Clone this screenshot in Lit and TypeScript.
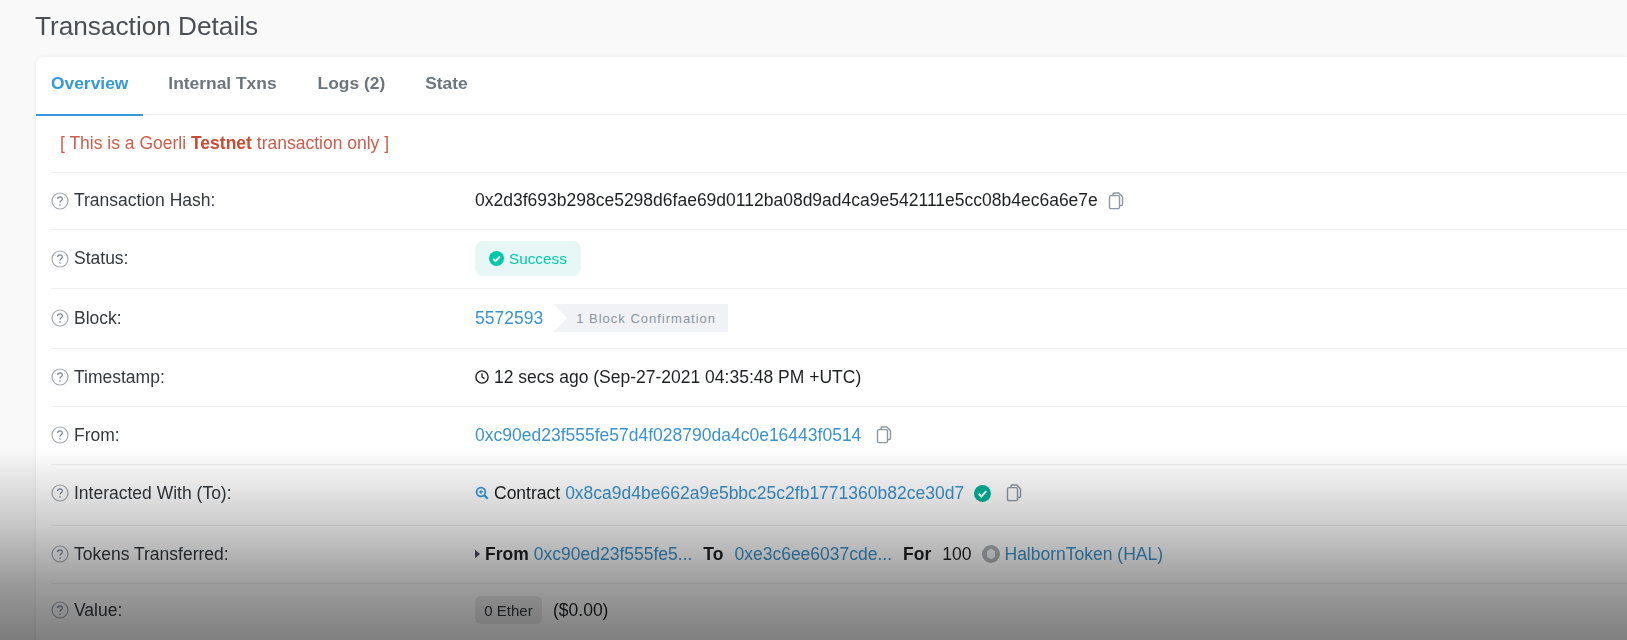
import { LitElement, html, css } from "lit";
import { customElement } from "lit/decorators.js";

const help = html`<svg class="help" viewBox="0 0 18 18" width="18" height="18"><circle cx="9" cy="9" r="8" fill="none" stroke="#a3a8ad" stroke-width="1.2"/><path d="M6.6 7.1c.1-1.4 1-2.2 2.4-2.2 1.4 0 2.3.8 2.3 2 0 1.8-2.3 1.8-2.3 3.6" fill="none" stroke="#77838f" stroke-width="1.2"/><circle cx="9" cy="13" r=".8" fill="#77838f"/></svg>`;
const copy = html`<svg class="copy" viewBox="0 0 16 18" width="16" height="18"><path d="M5 3.5V2.2C5 1.5 5.5 1 6.2 1h4.6L14.5 4.7v7.6c0 .7-.5 1.2-1.2 1.2H12" fill="none" stroke="#8c98a4" stroke-width="1.4"/><rect x="1.5" y="3.6" width="10" height="13" rx="1.4" fill="#fff" fill-opacity=".3" stroke="#8c98a4" stroke-width="1.4"/></svg>`;
const check = (c: string, s: number) => html`<svg viewBox="0 0 16 16" width=${s} height=${s}><circle cx="8" cy="8" r="8" fill=${c}/><path d="M4.4 8.3l2.5 2.5 4.7-5" fill="none" stroke="#fff" stroke-width="1.9"/></svg>`;

@customElement("app-root")
export class AppRoot extends LitElement {
  static styles = css`
    :host { display: block; height: 640px; overflow: hidden; position: relative; background: #f9f9fa; font-family: "Liberation Sans", Arial, sans-serif; color: #1e2022; font-size: 17.5px; }
    .page { padding-left: 36px; filter: blur(0.45px); }
    h1 { margin: 0 0 0 -1px; height: 57px; box-sizing: border-box; padding-top: 11px; font-weight: 400; font-size: 26.2px; line-height: 30px; color: #4a4f55; }
    .card { background: #fff; border-radius: 8px 0 0 0; box-shadow: 0 0 4px rgba(0,0,0,.07); height: 600px; }
    .tabs { display: flex; height: 58px; border-bottom: 1px solid #eef0f2; box-sizing: border-box; }
    .tab { padding: 0 20px 4px; display: flex; align-items: center; font-weight: 700; font-size: 17.4px; color: #6c757d; box-sizing: border-box; height: 59px; border-bottom: 2px solid transparent; }
    .tab.first { padding: 0 15px 4px; margin-right: 5px; color: #3498db; border-bottom-color: #3498db; }
    .tab.logs { margin-left: 1px; }
    .body { padding-left: 15px; }
    .row { display: grid; grid-template-columns: 424px 1fr; align-items: center; border-bottom: 1px solid #eef0f2; box-sizing: border-box; padding-bottom: 1px; }
    .row.lift { padding-bottom: 4px; }
    .row.lift2 { padding-bottom: 5px; }
    .notice { display: block; height: 58px; line-height: 56px; padding-left: 9px; color: #cf5c4a; }
    .notice b { color: #cc4a30; }
    .label { display: flex; align-items: center; gap: 5px; color: #33383d; }
    .help { flex: none; }
    .value { display: flex; align-items: center; white-space: nowrap; }
    a { color: #3a93cc; text-decoration: none; }
    .copy { margin-left: 10px; }
    .status { display: inline-flex; align-items: center; gap: 5px; height: 35px; width: 106px; box-sizing: border-box; padding-left: 14px; background: #e6f7f5; border-radius: 8px; color: #00c9a7; font-size: 15.3px; }
    .conf { margin-left: 10px; height: 28px; width: 175px; box-sizing: border-box; background: #f1f2f5; color: #8a95a0; font-size: 13px; letter-spacing: 1px; display: flex; align-items: center; padding-left: 23px; clip-path: polygon(0 0, 100% 0, 100% 100%, 0 100%, 14px 50%); }
    .gap { margin-left: 5px; }
    .m6 { margin-left: 5px; }
    .m11 { margin-left: 11px; }
    .spacer5 { width: 5px; }
    .spacer10 { width: 10px; }
    .token { margin: 0 5px 0 10px; }
    .ether { display: inline-flex; align-items: center; justify-content: center; width: 67px; height: 28px; border-radius: 6px; background: #eaeaea; font-size: 15px; margin-right: 11px; color: #33383d; }
    .shade { position: absolute; left: 0; right: 0; top: 448px; bottom: 0; background: linear-gradient(to bottom, rgba(0,0,0,0), rgba(0,0,0,.2) 40%, rgba(0,0,0,.38) 70%, rgba(0,0,0,.5)); pointer-events: none; }
  `;

  row(label: string, h: number, value: unknown, cls = "") {
    return html`<div class="row ${cls}" style="height:${h}px"><div class="label">${help}<span>${label}</span></div><div class="value">${value}</div></div>`;
  }

  render() {
    return html`<div class="page">
      <h1>Transaction Details</h1>
      <div class="card">
        <div class="tabs">
          <div class="tab first">Overview</div><div class="tab">Internal Txns</div><div class="tab logs">Logs (2)</div><div class="tab">State</div>
        </div>
        <div class="body">
          <div class="row notice">[ This is a Goerli <b>Testnet</b> transaction only ]</div>
          ${this.row("Transaction Hash:", 57, html`<span>0x2d3f693b298ce5298d6fae69d0112ba08d9ad4ca9e542111e5cc08b4ec6a6e7e</span>${copy}`)}
          ${this.row("Status:", 59, html`<span class="status">${check("#00c9a7", 15)}Success</span>`)}
          ${this.row("Block:", 60, html`<a>5572593</a><span class="conf">1 Block Confirmation</span>`)}
          ${this.row("Timestamp:", 58, html`<svg viewBox="0 0 16 16" width="14" height="14"><circle cx="8" cy="8" r="7" fill="none" stroke="#1e2022" stroke-width="1.6"/><path d="M8 3.8V8l3 1.8" fill="none" stroke="#1e2022" stroke-width="1.5"/></svg><span class="gap">12 secs ago (Sep-27-2021 04:35:48 PM +UTC)</span>`)}
          ${this.row("From:", 58, html`<a>0xc90ed23f555fe57d4f028790da4c0e16443f0514</a><span class="spacer5"></span>${copy}`)}
          ${this.row("Interacted With (To):", 61, html`<svg viewBox="0 0 16 16" width="14" height="14"><circle cx="6.8" cy="6.8" r="5" fill="none" stroke="#3498db" stroke-width="2"/><path d="M10.5 10.5l4 4" stroke="#3498db" stroke-width="2.6"/><path d="M4.5 6.8h4.6M6.8 4.5v4.6" stroke="#3498db" stroke-width="1.4"/></svg><span class="gap">Contract</span><a class="gap">0x8ca9d4be662a9e5bbc25c2fb1771360b82ce30d7</a><span class="spacer10"></span>${check("#00b39a", 17)}<span class="spacer5"></span>${copy}`, "lift")}
          ${this.row("Tokens Transferred:", 58, html`<svg viewBox="0 0 6 10" width="5" height="10"><path d="M0 0l6 5-6 5z" fill="#4a4f55"/></svg><b class="gap">From</b><a class="m6">0xc90ed23f555fe5...</a><b class="m11">To</b><a class="m11">0xe3c6ee6037cde...</a><b class="m11">For</b><span class="m11">100</span><svg class="token" viewBox="0 0 18 18" width="18" height="18"><circle cx="9" cy="9" r="9" fill="#aeb2b6"/><path d="M9 3.5l4 2.5v6l-4 2.5-4-2.5V6z" fill="#eceef0"/></svg><a>HalbornToken (HAL)</a>`)}
          ${this.row("Value:", 58, html`<span class="ether">0 Ether</span><span>($0.00)</span>`, "lift2")}
        </div>
      </div>
    </div>
    <div class="shade"></div>`;
  }
}
